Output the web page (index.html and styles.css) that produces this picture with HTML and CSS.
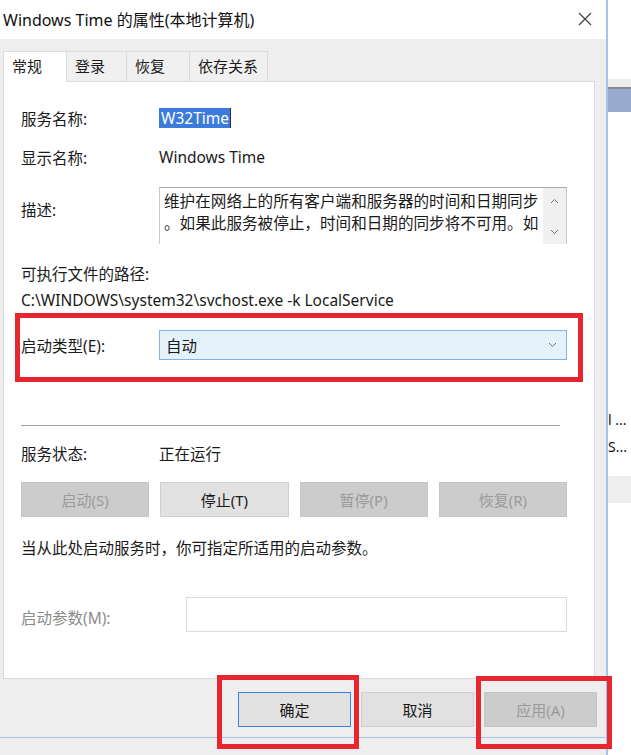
FILE: index.html
```html
<!DOCTYPE html>
<html>
<head lang="zh-CN">
    <meta charset="UTF-8">
    <title>Windows Time 的属性(本地计算机)</title>
    <link rel="stylesheet" href="styles.css">
</head>
<body>
<div class="screen">
    <div class="dialog">
        <div class="titlebar">
            <span class="title">Windows Time 的属性(本地计算机)</span>
            <svg class="close" width="14" height="14" viewBox="0 0 14 14">
                <path d="M1 1L13 13M13 1L1 13" stroke="#404040" stroke-width="1.2" fill="none"/>
            </svg>
        </div>
        <ul class="tabs">
            <li class="active">常规</li>
            <li>登录</li>
            <li>恢复</li>
            <li>依存关系</li>
        </ul>
        <div class="panel">
            <div class="row row-name">
                <span class="label">服务名称:</span>
                <span class="selected">W32Time</span>
            </div>
            <div class="row row-display">
                <span class="label">显示名称:</span>
                <span>Windows Time</span>
            </div>
            <div class="row row-desc">
                <span class="label">描述:</span>
                <div class="desc">
                    <div class="desc-text">维护在网络上的所有客户端和服务器的时间和日期同步<br>。如果此服务被停止，时间和日期的同步将不可用。如</div>
                    <div class="scroll">
                        <svg width="9" height="6" viewBox="0 0 9 6"><path d="M1 5L4.5 1.5L8 5" stroke="#707070" fill="none"/></svg>
                        <svg width="9" height="6" viewBox="0 0 9 6"><path d="M1 1L4.5 4.5L8 1" stroke="#707070" fill="none"/></svg>
                    </div>
                </div>
            </div>
            <div class="path-label">可执行文件的路径:</div>
            <div class="path">C:\WINDOWS\system32\svchost.exe -k LocalService</div>
            <div class="row row-startup">
                <span class="label">启动类型(E):</span>
                <div class="combo">
                    <span>自动</span>
                    <svg width="9" height="6" viewBox="0 0 9 6"><path d="M1 1L4.5 4.5L8 1" stroke="#707070" fill="none"/></svg>
                </div>
            </div>
            <div class="separator"></div>
            <div class="row row-status">
                <span class="label">服务状态:</span>
                <span>正在运行</span>
            </div>
            <div class="svc-buttons">
                <button class="btn disabled">启动(S)</button>
                <button class="btn">停止(T)</button>
                <button class="btn disabled">暂停(P)</button>
                <button class="btn disabled">恢复(R)</button>
            </div>
            <div class="hint">当从此处启动服务时，你可指定所适用的启动参数。</div>
            <div class="row row-params">
                <span class="label muted">启动参数(M):</span>
                <div class="params"></div>
            </div>
        </div>
        <div class="footer">
            <button class="btn default">确定</button>
            <button class="btn">取消</button>
            <button class="btn disabled">应用(A)</button>
        </div>
    </div>
    <div class="behind">
        <div class="behind-head"></div>
        <div class="behind-bar"></div>
        <div class="behind-rows">
            <div>l ...</div>
            <div>S...</div>
        </div>
        <div class="behind-band"></div>
    </div>

    <!-- red marks -->
    <div class="mark mark-startup"></div>
    <div class="mark mark-ok"></div>
    <div class="mark mark-apply"></div>
</div>
</body>
</html>
```

FILE: styles.css
```css
* {
    box-sizing: border-box;
}

body, ul, li, div {
    margin: 0;
    padding: 0;
}

body {
    font-family: "Noto Sans", "Noto Sans CJK SC", sans-serif;
    font-size: 15.5px;
    color: #1a1a1a;
    background: #f0f0f0;
}

li {
    list-style: none;
}

.screen {
    position: relative;
    display: flex;
    width: 631px;
    height: 755px;
    overflow: hidden;
}

/* dialog window */
.dialog {
    width: 608px;
    height: 755px;
    background: #eeeeee;
    border-right: 2px solid #a3c4ec;
    display: flex;
    flex-direction: column;
}

.titlebar {
    height: 39px;
    background: #fff;
    display: flex;
    align-items: center;
    justify-content: space-between;
    padding: 0 14px 2px 3px;
}

.title {
    font-size: 16px;
    color: #111;
}

.tabs {
    display: flex;
    margin-top: 12px;
    padding-left: 3px;
    height: 30px;
    font-size: 15px;
}

.tabs li {
    height: 30px;
    line-height: 29px;
    padding: 0 8px;
    border: 1px solid #dadada;
    border-left: none;
    border-bottom: none;
    background: #f0f0f0;
}

.tabs li:nth-child(2) { width: 60px; }
.tabs li:nth-child(3) { width: 63px; }
.tabs li:nth-child(4) { width: 78px; }

.tabs li.active {
    width: 64px;
    background: #fff;
    border-left: 1px solid #dadada;
    position: relative;
    z-index: 1;
    height: 31px;
}

.panel {
    height: 598px;
    margin: 0 11px 0 3px;
    background: #fff;
    border: 1px solid #dadada;
    padding: 0 27px 0 17px;
}

.row {
    display: flex;
    align-items: center;
}

.label {
    width: 138px;
    flex-shrink: 0;
}

.muted {
    color: #8c8c8c;
}

.row-name {
    margin-top: 24px;
    height: 24px;
}

.selected {
    background: #3b7bdb;
    color: #fff;
    padding: 0 1px 0 2px;
    height: 20px;
    line-height: 20px;
    border-right: 1px solid #333;
}

.row-display {
    margin-top: 15px;
    height: 24px;
}

.row-desc {
    margin-top: 18px;
    align-items: flex-start;
}

.row-desc .label {
    padding-top: 11px;
}

.desc {
    display: flex;
    width: 408px;
    height: 57px;
    border: 1px solid #c8c8c8;
    border-top-color: #a8a8a8;
    border-bottom: none;
}

.desc-text {
    flex: 1;
    padding: 2px 0 0 4px;
    font-size: 15.6px;
    line-height: 22px;
    white-space: nowrap;
    overflow: hidden;
}

.scroll {
    width: 23px;
    background: #f0f0f0;
    display: flex;
    flex-direction: column;
    align-items: center;
    justify-content: space-between;
    padding: 10px 0 9px;
}

.path-label {
    margin-top: 20px;
    line-height: 20px;
}

.path {
    margin-top: 6px;
    line-height: 20px;
}

.row-startup {
    margin-top: 20px;
}

.combo {
    width: 409px;
    height: 30px;
    background: #e5f1fb;
    border: 1px solid #7eb4ea;
    display: flex;
    align-items: center;
    justify-content: space-between;
    padding: 0 9px 0 6px;
}

.separator {
    margin: 65px 7px 0 0;
    height: 1px;
    background: #a0a0a0;
}

.row-status {
    margin-top: 17px;
    height: 20px;
}

.svc-buttons {
    margin-top: 19px;
    display: grid;
    grid-template-columns: repeat(4, 1fr);
    gap: 11px;
}

.btn {
    height: 35px;
    font-family: inherit;
    font-size: 15px;
    color: #1a1a1a;
    background: #e1e1e1;
    border: 1px solid #cfcfcf;
}

.btn.disabled {
    background: #cccccc;
    border-color: #c4c4c4;
    color: #9a9a9a;
}

.btn.default {
    border-color: #3c82dc;
}

.hint {
    margin-top: 21px;
    line-height: 20px;
}

.row-params {
    margin-top: 39px;
    align-items: flex-start;
}

.row-params .label {
    padding-top: 9px;
}

.params {
    width: 381px;
    height: 35px;
    margin-left: 27px;
    border: 1px solid #dcdcdc;
}

.footer {
    display: flex;
    justify-content: flex-end;
    gap: 10px;
    padding: 13px 9px 0 0;
    height: 59px;
    border-bottom: 1px solid #a3c4ec;
}

.footer .btn {
    width: 113px;
}

/* window behind the dialog */
.behind {
    flex: 1;
    background: #fff;
    display: flex;
    flex-direction: column;
}

.behind-head {
    border-top: 49px solid #fff;
    background: linear-gradient(#fff 0 30px, #ececec 30px);
    border-bottom: 2px solid #8a8a8a;
    box-sizing: content-box;
    height: 38px;
}

.behind-bar {
    height: 23px;
    background: #98abcf;
}

.behind-rows {
    margin-top: 294px;
    font-size: 14px;
    line-height: 27px;
    color: #111;
}

.behind-band {
    margin-top: 16px;
    height: 27px;
    background: #eeeeee;
}

/* red marks */
.mark {
    position: absolute;
    border: 5px solid #e8262f;
}

.mark-startup {
    left: 15px;
    top: 313px;
    width: 568px;
    height: 69px;
}

.mark-ok {
    left: 217px;
    top: 675px;
    width: 142px;
    height: 74px;
}

.mark-apply {
    left: 476px;
    top: 676px;
    width: 136px;
    height: 73px;
}
```
